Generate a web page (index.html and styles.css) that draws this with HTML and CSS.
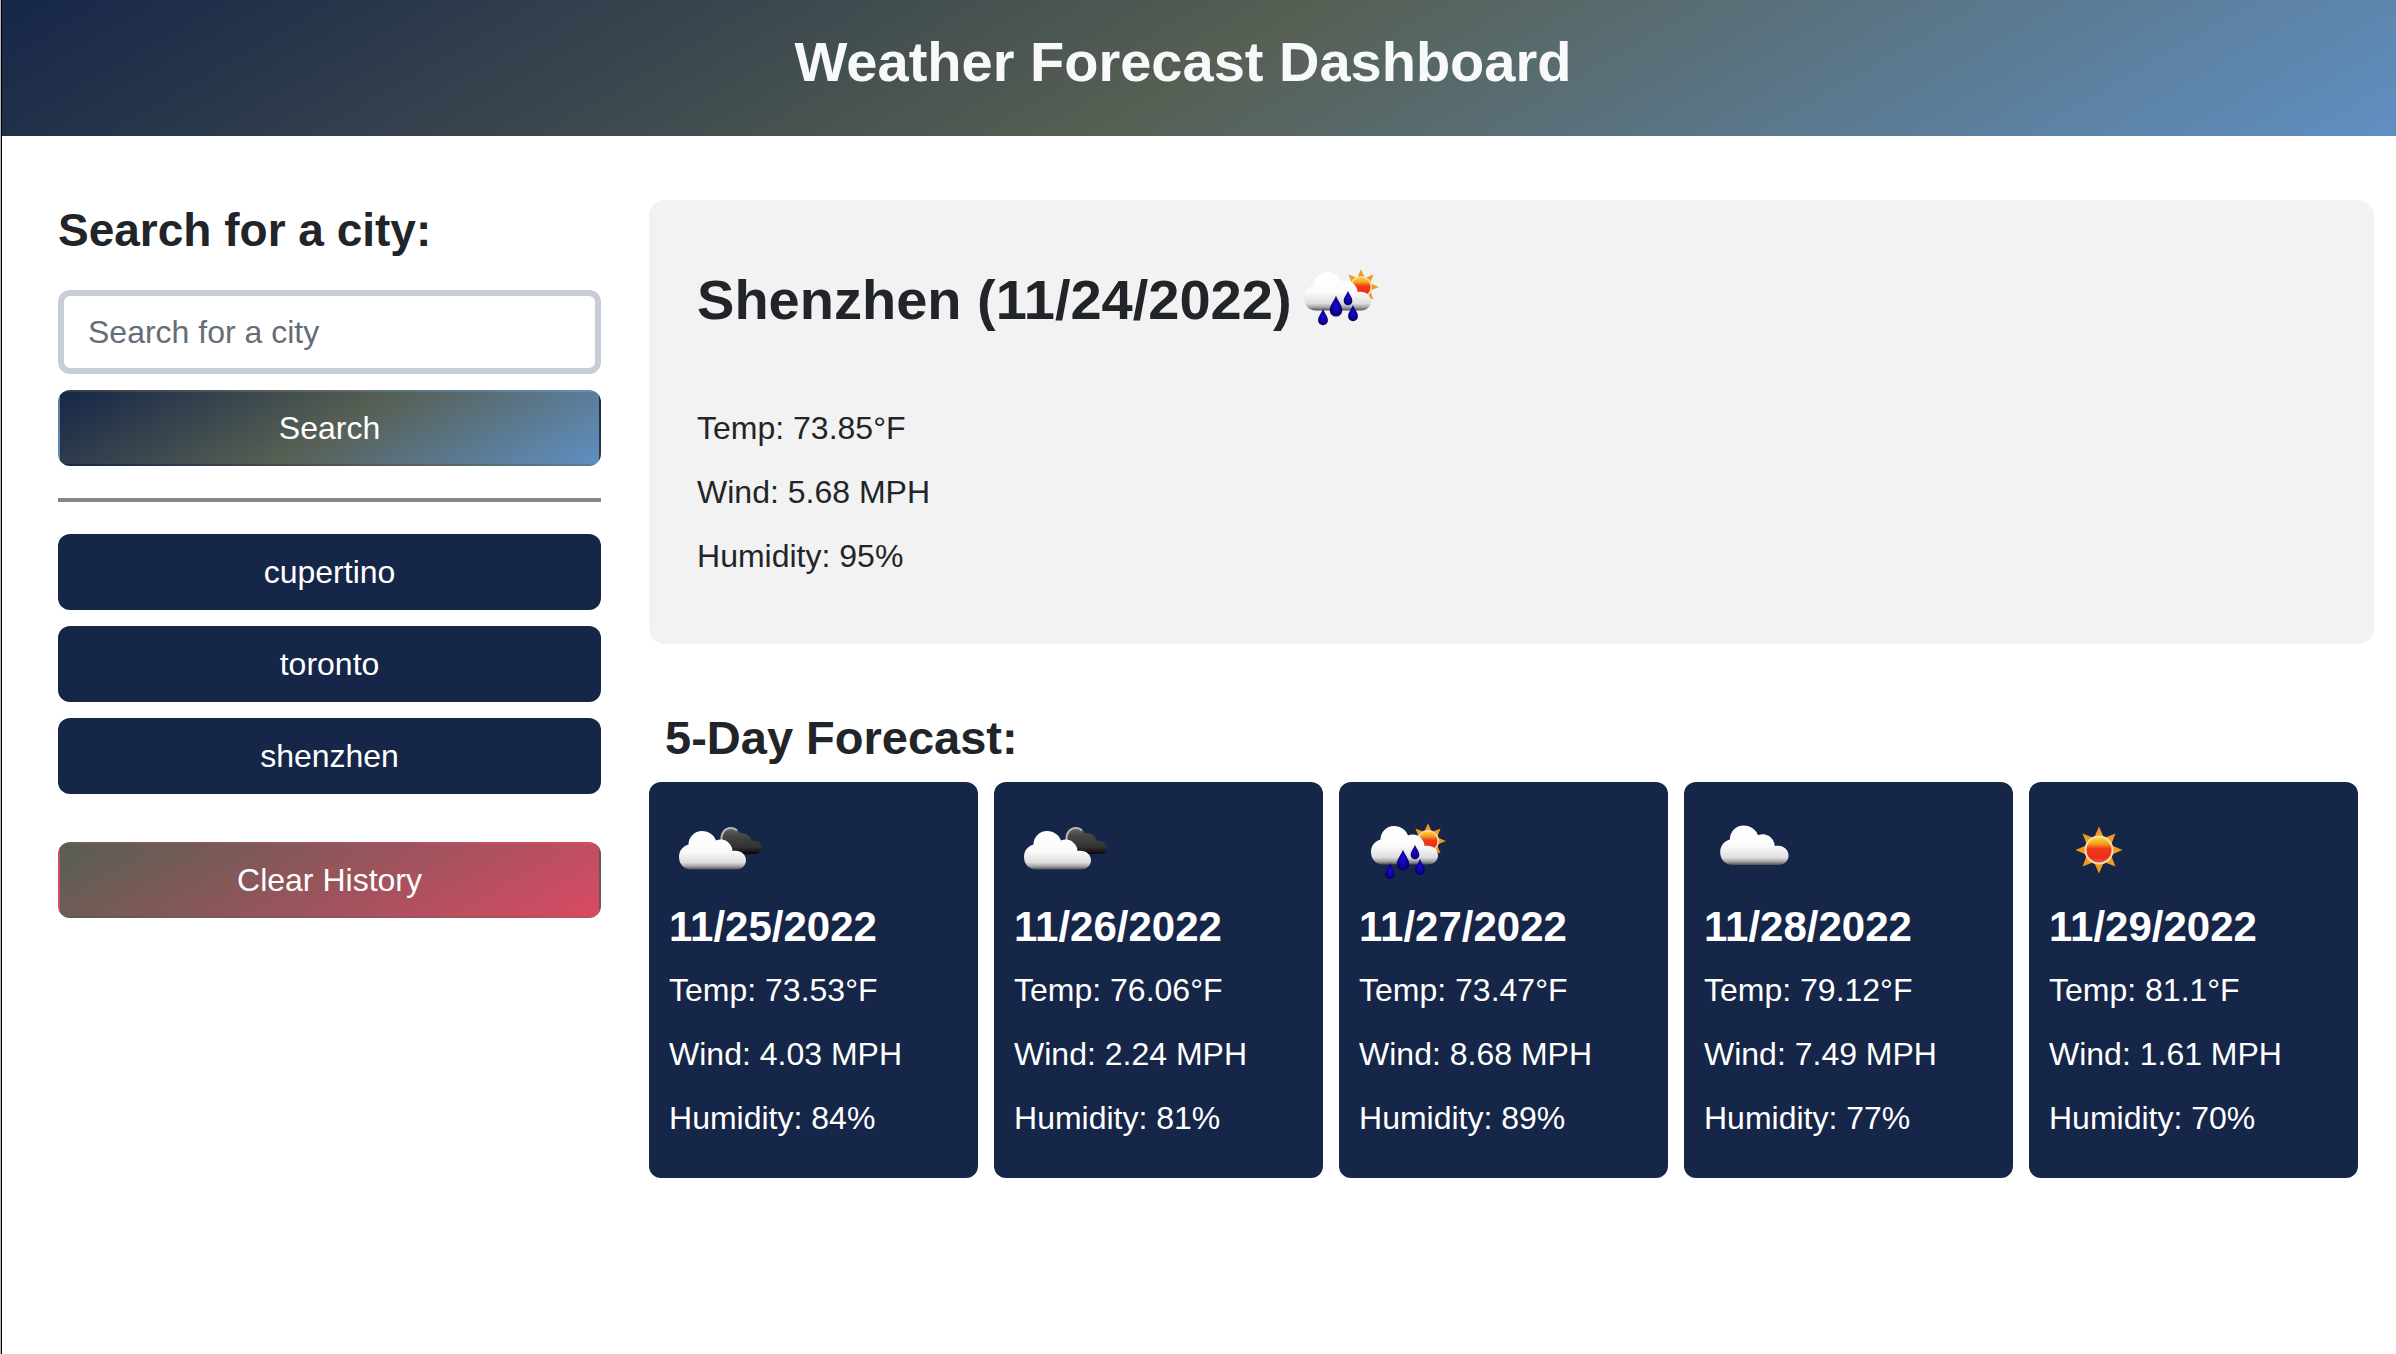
FILE: index.html
```html
<!DOCTYPE html>
<html lang="en">
<head>
<meta charset="utf-8">
<meta name="viewport" content="width=device-width, initial-scale=1">
<title>Weather Forecast Dashboard</title>
<link rel="stylesheet" href="styles.css">
</head>
<body>
<svg class="defs" width="0" height="0" aria-hidden="true">
  <defs>
    <linearGradient id="white" gradientUnits="userSpaceOnUse" x1="0" y1="32" x2="0" y2="70">
      <stop offset="0" stop-color="#fff"/><stop offset=".5" stop-color="#fbfbfb"/><stop offset=".8" stop-color="#dedede"/><stop offset=".9" stop-color="#a5a5a5"/><stop offset="1" stop-color="#454545"/>
    </linearGradient>
    <linearGradient id="dark" gradientUnits="userSpaceOnUse" x1="0" y1="28" x2="0" y2="55">
      <stop offset="0" stop-color="#666"/><stop offset=".3" stop-color="#444"/><stop offset=".7" stop-color="#333"/><stop offset="1" stop-color="#000"/>
    </linearGradient>
    <linearGradient id="disc" x1="0" y1="0" x2="0" y2="1">
      <stop offset="0" stop-color="#fcd535"/><stop offset=".25" stop-color="#f6a01e"/><stop offset=".45" stop-color="#ee3a18"/><stop offset=".8" stop-color="#ea3018"/><stop offset="1" stop-color="#f0524a"/>
    </linearGradient>
    <radialGradient id="rain"><stop offset="0" stop-color="#1c08d8"/><stop offset="1" stop-color="#070070"/></radialGradient>
    <path id="cloud" fill="url(#white)" d="M22 69.500C15 69.500 10 64 10 57C10 50.500 14 46 19.500 44.500C19.500 37 25.500 31 33 31C40 31 45.500 35.500 47 40.500C50 39 54 39 57.500 41C61.500 43.500 63.500 47.500 63.500 51C71 49.500 77 54 77 60C77 65.500 73 69.500 67 69.500Z"/>
    <path id="drop" fill="url(#rain)" d="M0-10C1.500-5 6-1 6 4A6 6 0 0 1-6 4C-6-1-1.500-5 0-10Z"/>
    <g id="sun">
      <path fill="#f09a22" d="M0-23.500L5-12 16.500-16.500 12-5 23.500 0 12 5 16.500 16.500 5 12 0 23.500-5 12-16.500 16.500-12 5-23.500 0-12-5-16.500-16.500-5-12Z"/>
      <circle r="14.500" fill="#f8dcae"/><circle r="12.500" fill="url(#disc)"/>
    </g>
    <symbol id="clear" viewBox="0 0 100 100"><use href="#sun" x="50" y="50"/></symbol>
    <symbol id="few" viewBox="0 0 100 100"><use href="#cloud" transform="translate(6 -6) scale(1.020)"/></symbol>
    <symbol id="broken" viewBox="0 0 100 100">
      <path fill="url(#dark)" d="M52 41C51 32 56 27 62 27C66 27 69 29.500 71 33.500C77 32.500 81 35.500 82.500 40.500C89 40.500 93 43.500 93 48C93 51.500 90 54 86 54H60Z"/>
      <path fill="none" stroke="#b5b5b5" stroke-width="2" d="M52.500 40C52 33 56 28 62 28C64.500 28 66.500 29 68 30.500"/>
      <use href="#cloud"/>
    </symbol>
    <symbol id="showers" viewBox="0 0 100 100">
      <use href="#sun" transform="translate(69 41) scale(.76)"/>
      <use href="#cloud" x="2" y="-5"/>
      <use href="#drop" transform="translate(31 71) scale(.82)"/>
      <use href="#drop" transform="translate(44 60) scale(1.050)"/>
      <use href="#drop" transform="translate(56 52) scale(.72)"/>
      <use href="#drop" transform="translate(61 67) scale(.82)"/>
    </symbol>
  </defs>
</svg>

<header class="header"><h1>Weather Forecast Dashboard</h1></header>

<main class="main">
  <aside class="sidebar">
    <form class="search">
      <label class="title search-title" for="city">Search for a city:</label>
      <input class="field" id="city" type="text" placeholder="Search for a city">
      <button class="btn btn-search" type="button">Search</button>
    </form>
    <hr class="rule">
    <div class="history">
      <button class="btn" type="button">cupertino</button>
      <button class="btn" type="button">toronto</button>
      <button class="btn" type="button">shenzhen</button>
    </div>
    <button class="btn btn-clear" type="button">Clear History</button>
  </aside>

  <div class="content">
    <section class="today">
      <div class="today-head">
        <h2>Shenzhen (11/24/2022)</h2>
        <svg class="icon" role="img" aria-label="Rain"><use href="#showers"/></svg>
      </div>
      <div class="stats"><p>Temp: 73.85°F</p><p>Wind: 5.68 MPH</p><p>Humidity: 95%</p></div>
    </section>

    <section class="forecast">
      <h3 class="title forecast-title">5-Day Forecast:</h3>
      <div class="cards">
        <article class="card">
          <svg class="icon" role="img" aria-label="Broken clouds"><use href="#broken"/></svg>
          <h4>11/25/2022</h4>
          <div class="stats"><p>Temp: 73.53°F</p><p>Wind: 4.03 MPH</p><p>Humidity: 84%</p></div>
        </article>
        <article class="card">
          <svg class="icon" role="img" aria-label="Broken clouds"><use href="#broken"/></svg>
          <h4>11/26/2022</h4>
          <div class="stats"><p>Temp: 76.06°F</p><p>Wind: 2.24 MPH</p><p>Humidity: 81%</p></div>
        </article>
        <article class="card">
          <svg class="icon" role="img" aria-label="Rain"><use href="#showers"/></svg>
          <h4>11/27/2022</h4>
          <div class="stats"><p>Temp: 73.47°F</p><p>Wind: 8.68 MPH</p><p>Humidity: 89%</p></div>
        </article>
        <article class="card">
          <svg class="icon" role="img" aria-label="Clouds"><use href="#few"/></svg>
          <h4>11/28/2022</h4>
          <div class="stats"><p>Temp: 79.12°F</p><p>Wind: 7.49 MPH</p><p>Humidity: 77%</p></div>
        </article>
        <article class="card">
          <svg class="icon" role="img" aria-label="Clear sky"><use href="#clear"/></svg>
          <h4>11/29/2022</h4>
          <div class="stats"><p>Temp: 81.1°F</p><p>Wind: 1.61 MPH</p><p>Humidity: 70%</p></div>
        </article>
      </div>
    </section>
  </div>
</main>
</body>
</html>
```
FILE: styles.css
```css
* { box-sizing: border-box; }

html {
  min-height: 100%;
  background: linear-gradient(90deg, #b4b4b4 1px, #000 1px 2px, #fff 2px);
}

body {
  margin: 0 0 0 2px;
  color: #212529;
  font: 32px/48px "Liberation Sans", Arial, sans-serif;
}

h1, h2, h3, h4, p { margin: 0; }

.defs { position: absolute; }

.header {
  padding: 28px 32px 40px 0;
  background: linear-gradient(150deg, #162648, #565f53, #5f8fc2);
  color: #f8f9fa;
  text-align: center;
}

.header h1 { font-size: 56px; line-height: 68px; }

.main {
  display: grid;
  grid-template-columns: 17fr 54fr;
  align-items: start;
  gap: 48px;
  padding: 64px 22px 64px 56px;
}

.title {
  font-size: 46px;
  font-weight: bold;
  line-height: 60px;
}

.sidebar, .search, .history {
  display: flex;
  flex-direction: column;
}

.search, .history { gap: 16px; }

.search-title { margin-bottom: 14px; }

.field {
  width: 100%;
  height: 84px;
  padding: 0 24px;
  border: 6px solid #c7cdd6;
  border-radius: 12px;
  background: #fff;
  color: #212529;
  font: inherit;
}

.field::placeholder { color: #656d77; opacity: 1; }

.btn {
  width: 100%;
  padding: 12px 24px;
  border: 2px solid transparent;
  border-radius: 12px;
  background-color: #162648;
  color: #fff;
  font: inherit;
}

.btn-search { background-image: linear-gradient(150deg, #162648, #565f53, #5f8fc2); }

.btn-clear {
  margin-top: 48px;
  background-image: linear-gradient(150deg, #565f53, #d94a64);
}

.rule {
  width: 100%;
  height: 4px;
  margin: 32px 0;
  border: 0;
  background: #818a82;
}

.today {
  padding: 46px 48px 64px;
  border-radius: 16px;
  background: #f2f2f2;
}

.today-head {
  display: flex;
  align-items: center;
  margin-bottom: 58px;
}

.today-head h2 {
  padding-top: 8px;
  font-size: 56px;
  line-height: 68px;
}

.icon {
  display: block;
  width: 100px;
  height: 100px;
}

.stats {
  display: grid;
  gap: 16px;
}

.forecast { padding-right: 16px; }

.forecast-title {
  margin: 64px 0 14px;
  padding-left: 16px;
  font-size: 47px;
}

.cards {
  display: grid;
  grid-template-columns: repeat(5, 1fr);
  gap: 16px;
}

.card {
  padding: 18px 18px 36px 20px;
  border-radius: 12px;
  background: #162648;
  color: #fff;
}

.card h4 {
  margin-bottom: 12px;
  font-size: 42px;
  line-height: 54px;
}
```
